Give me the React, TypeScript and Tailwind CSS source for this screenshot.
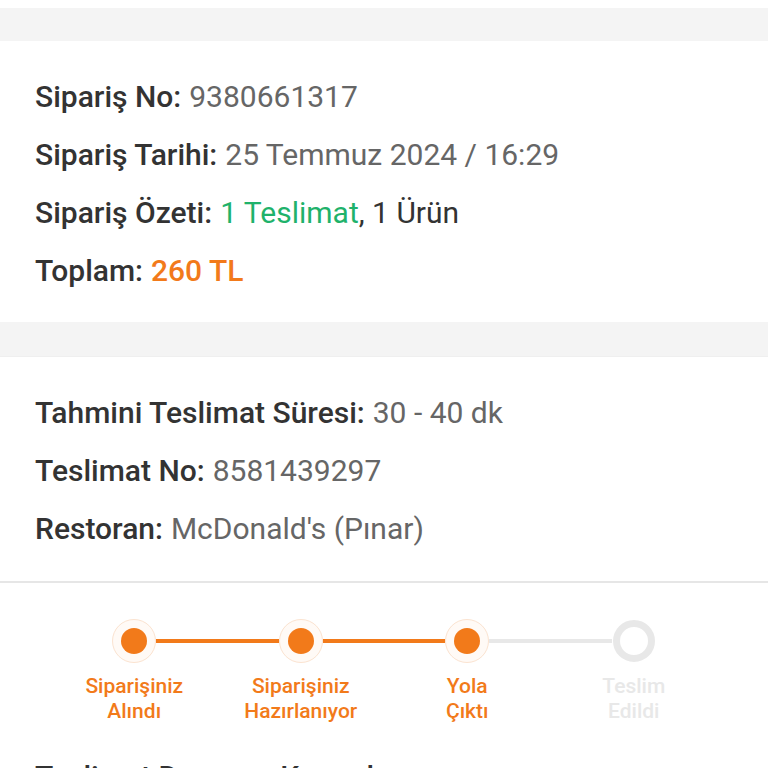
const Row = ({ label, children }: { label: string; children: React.ReactNode }) => (
  <div className="h-[58px] flex items-center text-[30px] leading-none">
    <span className="font-medium text-[#333333]">{label}</span>
    <span className="ml-[8px] text-[#666666]">{children}</span>
  </div>
);

type Step = { title: string; sub: string; done: boolean };

const steps: Step[] = [
  { title: "Siparişiniz", sub: "Alındı", done: true },
  { title: "Siparişiniz", sub: "Hazırlanıyor", done: true },
  { title: "Yola", sub: "Çıktı", done: true },
  { title: "Teslim", sub: "Edildi", done: false },
];

const Stepper = () => (
  <div className="px-[51px] pt-[36px] grid grid-cols-4">
    {steps.map((s, i) => {
      const next = steps[i + 1];
      return (
        <div key={i} className="flex flex-col items-center">
          <div className="relative w-full h-[44px] flex items-center justify-center">
            {i > 0 && (
              <div
                className={`absolute left-0 right-1/2 mr-[22px] h-[4px] top-[20px] ${
                  s.done ? "bg-[#f27a1a]" : "bg-[#e8e8e8]"
                }`}
              />
            )}
            {next && (
              <div
                className={`absolute right-0 left-1/2 ml-[22px] h-[4px] top-[20px] ${
                  next.done ? "bg-[#f27a1a]" : "bg-[#e8e8e8]"
                }`}
              />
            )}
            {s.done ? (
              <div className="w-[44px] h-[44px] rounded-full bg-[#fffaf6] border border-[#fbe3d0] flex items-center justify-center">
                <div className="w-[26px] h-[26px] rounded-full bg-[#f27a1a]" />
              </div>
            ) : (
              <div className="w-[42px] h-[42px] rounded-full border-[7px] border-[#e8e8e8] bg-white" />
            )}
          </div>
          <div
            className={`mt-[11px] text-center text-[21px] leading-[25px] font-medium ${
              s.done ? "text-[#f27a1a]" : "text-[#e8e8e8]"
            }`}
          >
            <div>{s.title}</div>
            <div>{s.sub}</div>
          </div>
        </div>
      );
    })}
  </div>
);

export default function App() {
  return (
    <div className="w-[768px] h-[768px] overflow-hidden bg-white font-['Roboto',sans-serif]">
      <div className="h-[8px] bg-white" />
      <div className="h-[33px] bg-[#f4f4f4]" />
      <div className="px-[35px] pt-[27px] pb-[22px]">
        <Row label="Sipariş No:">9380661317</Row>
        <Row label="Sipariş Tarihi:">25 Temmuz 2024 / 16:29</Row>
        <Row label="Sipariş Özeti:">
          <span className="text-[#1fb26b]">1 Teslimat</span>
          <span className="text-[#333333]">, 1 Ürün</span>
        </Row>
        <Row label="Toplam:">
          <span className="text-[#f27a1a] font-medium">260 TL</span>
        </Row>
      </div>
      <div className="h-[35px] bg-[#f4f4f4] border-b border-[#efefef]" />
      <div className="px-[35px] pt-[27px] pb-[23px] border-b-2 border-[#e6e6e6]">
        <Row label="Tahmini Teslimat Süresi:">30 - 40 dk</Row>
        <Row label="Teslimat No:">8581439297</Row>
        <Row label="Restoran:">McDonald's (Pınar)</Row>
      </div>
      <Stepper />
      <div className="px-[35px] pt-[38px] text-[30px] leading-none font-medium text-[#333333]">
        Teslimat Durumu: Kuryede
      </div>
    </div>
  );
}
